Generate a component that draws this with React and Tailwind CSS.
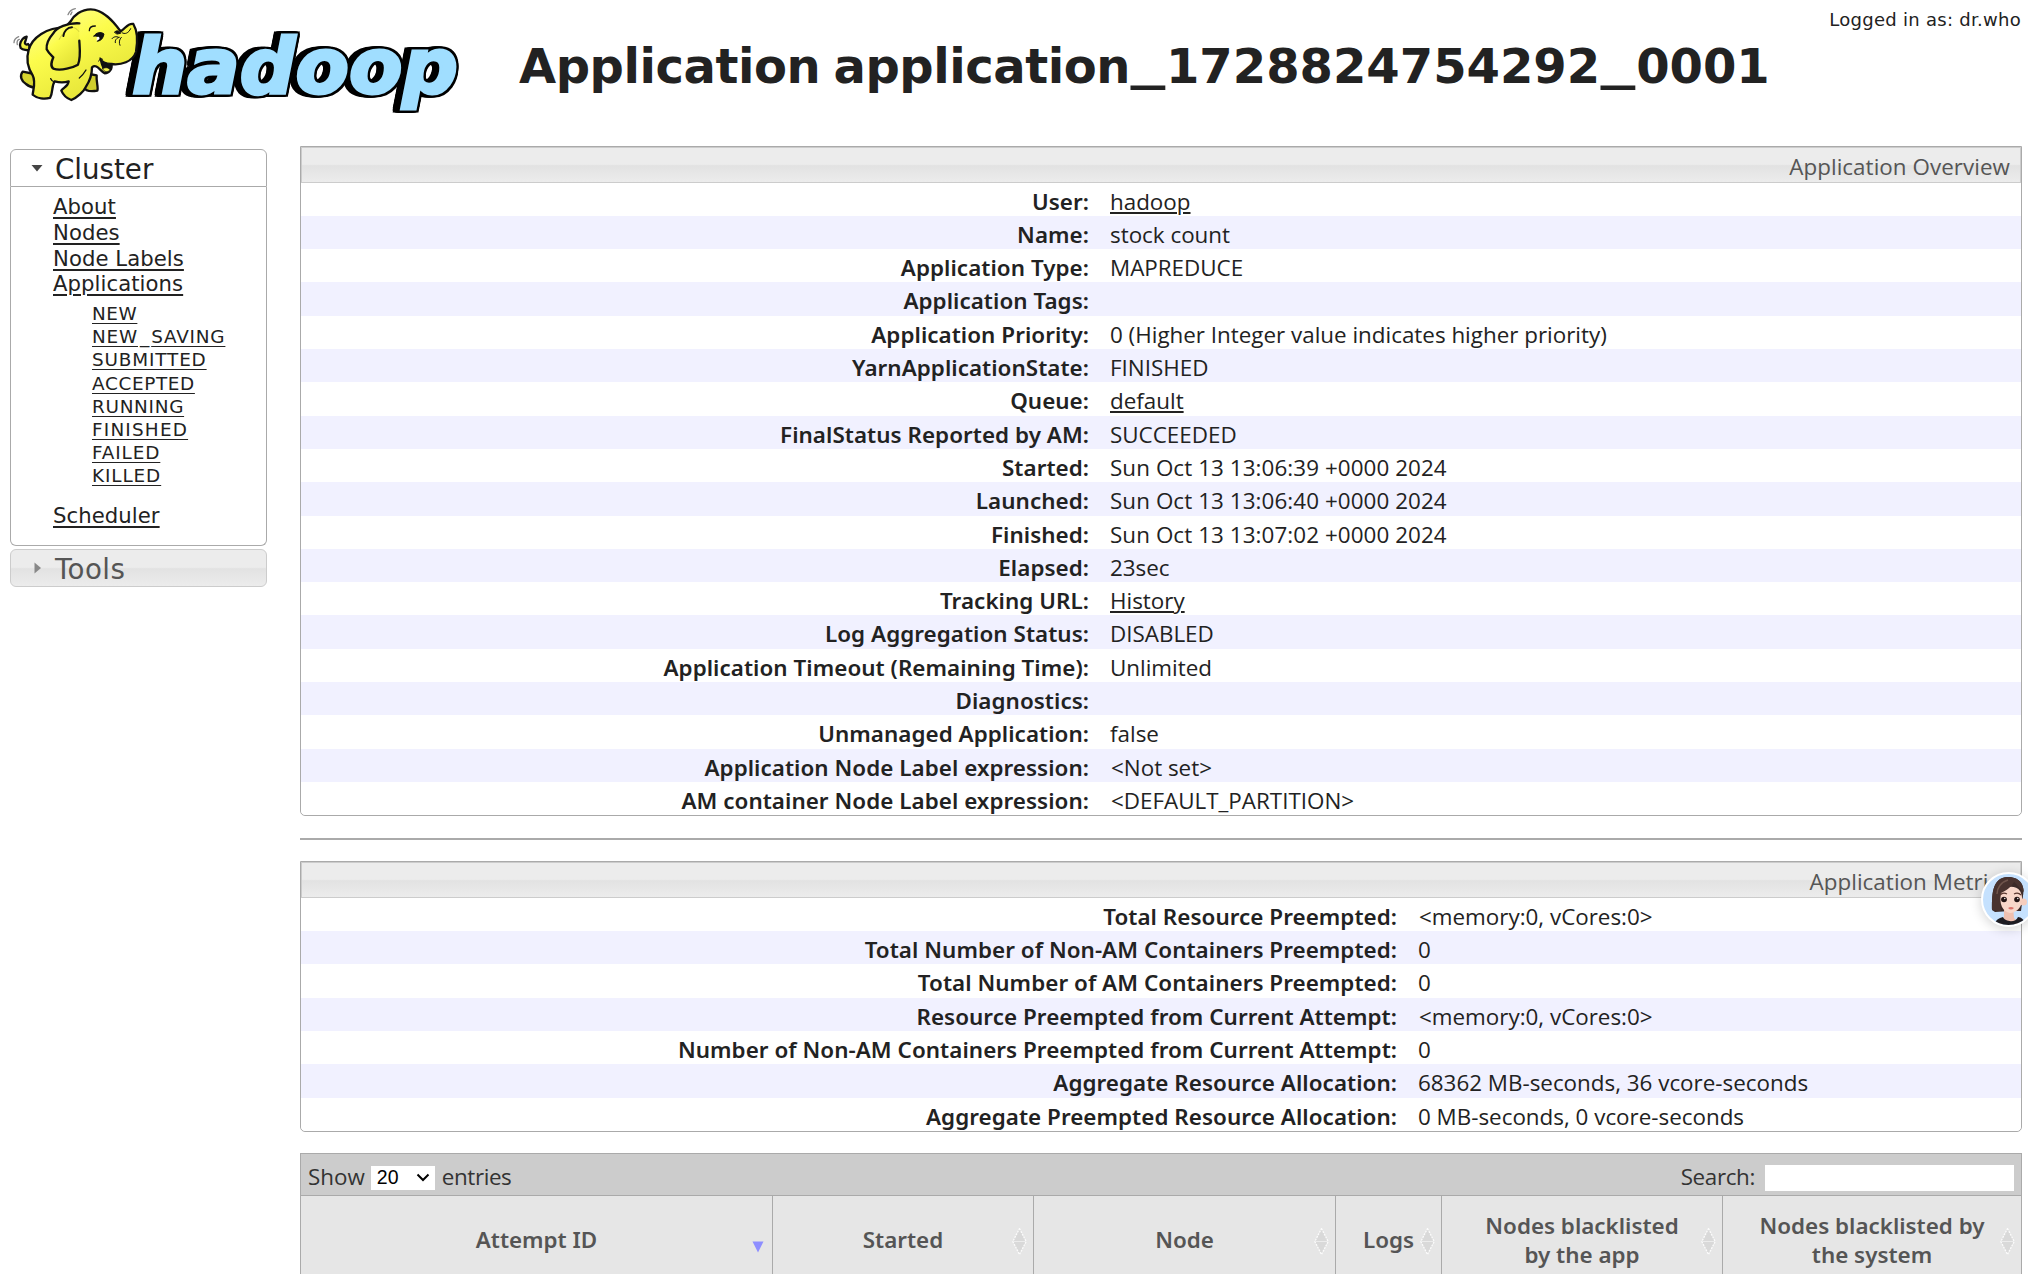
import React from "react";

const overview = [
  ["User:", "hadoop", true],
  ["Name:", "stock count"],
  ["Application Type:", "MAPREDUCE"],
  ["Application Tags:", ""],
  ["Application Priority:", "0 (Higher Integer value indicates higher priority)"],
  ["YarnApplicationState:", "FINISHED"],
  ["Queue:", "default", true],
  ["FinalStatus Reported by AM:", "SUCCEEDED"],
  ["Started:", "Sun Oct 13 13:06:39 +0000 2024"],
  ["Launched:", "Sun Oct 13 13:06:40 +0000 2024"],
  ["Finished:", "Sun Oct 13 13:07:02 +0000 2024"],
  ["Elapsed:", "23sec"],
  ["Tracking URL:", "History", true],
  ["Log Aggregation Status:", "DISABLED"],
  ["Application Timeout (Remaining Time):", "Unlimited"],
  ["Diagnostics:", ""],
  ["Unmanaged Application:", "false"],
  ["Application Node Label expression:", "<Not set>"],
  ["AM container Node Label expression:", "<DEFAULT_PARTITION>"],
];

const metrics = [
  ["Total Resource Preempted:", "<memory:0, vCores:0>"],
  ["Total Number of Non-AM Containers Preempted:", "0"],
  ["Total Number of AM Containers Preempted:", "0"],
  ["Resource Preempted from Current Attempt:", "<memory:0, vCores:0>"],
  ["Number of Non-AM Containers Preempted from Current Attempt:", "0"],
  ["Aggregate Resource Allocation:", "68362 MB-seconds, 36 vcore-seconds"],
  ["Aggregate Preempted Resource Allocation:", "0 MB-seconds, 0 vcore-seconds"],
];

const links = ["About", "Nodes", "Node Labels", "Applications"];

const states = [
  ["NEW", "tracking-[0.6px]"],
  ["NEW_SAVING", "tracking-[0.8px]"],
  ["SUBMITTED", "tracking-[0.85px]"],
  ["ACCEPTED", "tracking-[0.65px]"],
  ["RUNNING", "tracking-[0.7px]"],
  ["FINISHED", "tracking-[1.2px]"],
  ["FAILED", "tracking-[0.9px]"],
  ["KILLED", "tracking-[0.9px]"],
];

const columns = [
  [["Attempt ID"], "w-[472px]", true],
  [["Started"], "w-[261px]"],
  [["Node"], "w-[302px]"],
  [["Logs"], "w-[106px]"],
  [["Nodes blacklisted", "by the app"], "w-[281px]"],
  [["Nodes blacklisted by", "the system"], "w-[298px]"],
];

function Logo() {
  return (
    <svg width="470" height="120" viewBox="0 0 470 120" className="block">
      <g className="[filter:drop-shadow(2px_0_0_#000)_drop-shadow(-3px_0_0_#000)_drop-shadow(0_2px_0_#000)_drop-shadow(0_-2px_0_#000)_drop-shadow(-4px_0_0_#000)]">
        <text
          x="132"
          y="93"
          fontSize="77"
          fontWeight="700"
          fontStyle="italic"
          textLength="326"
          lengthAdjust="spacingAndGlyphs"
          fill="#a0deff"
          stroke="#a0deff"
          strokeWidth="3"
          strokeLinejoin="miter"
          className="font-[DejaVu_Sans]"
        >
          hadoop
        </text>
      </g>
      <defs>
        <linearGradient id="skin" x1="0" y1="0" x2="0.6" y2="1">
          <stop offset="0" stopColor="#ffff9e" />
          <stop offset="0.45" stopColor="#fcfc4c" />
          <stop offset="1" stopColor="#e3e236" />
        </linearGradient>
      </defs>
      <g transform="scale(0.3333)" stroke="#111" strokeWidth="7" strokeLinejoin="round" strokeLinecap="round" fill="url(#skin)">
        <path d="M68 215C58 228 64 244 78 252C88 260 98 264 108 262L104 222Z" fill="#d6d52f" />
        <path d="M252 262C256 272 268 276 292 272C296 262 288 246 290 226L268 222Z" fill="#cfce2d" />
        <path d="M85 152C76 148 70 152 62 144C56 132 64 118 74 112L80 110L76 124C72 132 80 136 84 132C90 136 90 146 85 152Z" />
        <path d="M196 82C140 82 96 112 86 150C78 176 84 204 98 226C108 246 100 266 98 284C112 296 134 298 150 294C160 276 154 258 164 244C178 248 194 248 206 244C204 260 190 262 184 272C190 286 202 296 214 300C232 292 252 274 258 260C270 242 276 220 276 202C290 190 300 212 314 220C328 220 338 206 334 192C362 196 398 186 408 156C414 122 412 92 400 72C384 68 378 84 362 94C340 64 310 28 272 28C244 28 222 46 212 64Z" />
        <path d="M300 174C304 196 310 212 320 216C334 212 336 198 332 190C318 190 306 184 300 174Z" fill="#111" strokeWidth="4" />
        <path d="M308 206C318 200 328 204 330 210C322 218 312 216 308 206Z" fill="#f3f24a" strokeWidth="2" />
        <path d="M238 70C204 68 168 82 160 100C146 116 138 130 140 148C146 160 154 166 160 172C154 186 150 198 160 206C184 214 220 202 234 194C244 170 238 132 238 122" />
        <path d="M236 94C222 72 196 82 178 118" fill="none" strokeWidth="3" stroke="#c9c83a" />
        <path d="M216 82C202 82 192 94 190 108" fill="none" strokeWidth="6" />
        <path d="M268 92C268 82 276 78 286 78" fill="none" strokeWidth="4" />
        <path d="M282 108C288 98 302 94 312 102C310 114 304 122 292 124C300 114 296 108 282 108Z" fill="#111" strokeWidth="3" />
        <path d="M290 112C296 108 300 112 298 118L290 122Z" fill="#fff" stroke="none" />
        <path d="M344 96C350 90 358 92 362 100L352 102Z" fill="#111" strokeWidth="3" />
        <path d="M366 98C374 104 386 100 392 86M336 116C340 110 350 108 356 112M346 128C344 120 350 114 358 112M360 136C356 128 358 118 364 112M308 178C298 170 300 182 296 184" fill="none" strokeWidth="3" />
        <path d="M152 236C156 244 160 246 164 244M258 210C252 220 246 228 238 234" fill="none" strokeWidth="4" />
        <path d="M204 44C208 34 214 28 226 26M212 44L216 36M42 128C42 120 46 114 56 110M52 134C50 126 52 120 58 118" fill="none" stroke="#888" strokeWidth="4" />
      </g>
    </svg>
  );
}

function Avatar() {
  return (
    <div className="absolute left-[1981px] top-[872px] size-[55px] overflow-hidden rounded-full border-2 border-white bg-[#c5e1fe] shadow-[0_2px_12px_rgba(0,0,0,0.18)]">
      <svg width="51" height="51" viewBox="0 0 51 51">
        <path d="M9 36C9 24 8 3 25 3C38 3 42 12 40 22L38 37L28 37L12 38Z" fill="#3b2a28" />
        <path d="M21 33L30 33L31 44L37 50L14 50L21 43Z" fill="#efc0b0" />
        <path d="M17 17C22 12 33 11 37 17C42 26 38 38 27 39C20 38 16 31 17 17Z" fill="#f8d7ca" />
        <circle cx="40.500" cy="28" r="3.500" fill="#f6cdbd" />
        <path d="M9 36C9 24 8 3 25 3C34 3 40 8 41 18C36 14 33 9 31 8C28 14 22 17 18 19C17 26 17 31 18 37Z" fill="#49332f" />
        <path d="M14 20C14 14 18 8 25 6" stroke="#70554c" strokeWidth="1.500" fill="none" />
        <path d="M17 21Q20 18 24 20M31 20Q35 18 38 21" stroke="#5a3830" strokeWidth="1.300" fill="none" />
        <ellipse cx="21" cy="25.500" rx="2.900" ry="2.700" fill="#231515" />
        <ellipse cx="34" cy="25.500" rx="2.800" ry="2.700" fill="#231515" />
        <circle cx="21.800" cy="24.500" r="0.700" fill="#fff" />
        <circle cx="34.800" cy="24.500" r="0.700" fill="#fff" />
        <path d="M25 34Q28 32 31 34Q28 37 25 34Z" fill="#d9736c" />
        <path d="M12 51C12 46 16 44 20 43C22 48 33 49 35 43C38 43 42 46 43 51Z" fill="#1d1c22" />
      </svg>
    </div>
  );
}

/* Text in which every underscore is drawn wider than the font's own. */
function Wide({ text, bar }) {
  return text.split("_").map((part, i) => (
    <React.Fragment key={i}>
      {i > 0 && <span className={bar}>_</span>}
      {part}
    </React.Fragment>
  ));
}

function InfoPanel({ title, rows, labelWidth }) {
  return (
    <div className="rounded-b-[5px] border border-[#aaaaaa] bg-white">
      <div className="h-[35.600px] border border-[#cccccc] bg-[linear-gradient(#ececec_0%,#ececec_48%,#e2e2e2_52%,#ececec_100%)] pr-[10px] text-right leading-[37px] tracking-[0.050px] text-[#555555]">
        {title}
      </div>
      {rows.map(([label, value, link], i) => (
        <div key={label} className={`flex h-[33.300px] gap-[21px] pt-[2px] leading-[33px] ${i % 2 ? "bg-[#f1f1ff]" : "bg-white"} last:rounded-b-[5px]`}>
          <div className={`${labelWidth} shrink-0 text-right font-[Noto_Sans] font-semibold tracking-[0.050px] whitespace-nowrap`}>{label}</div>
          <div className={`whitespace-nowrap ${value.startsWith("Sun") ? "tracking-[0.080px]" : ""} ${value.startsWith("<") ? "pl-px" : ""}`}>
            {link ? <a className="underline decoration-2 underline-offset-[2px]">{value}</a> : value}
          </div>
        </div>
      ))}
    </div>
  );
}

function SortIcon({ active }) {
  return active ? (
    <svg className="absolute right-[8px] top-[45px]" width="12" height="12" viewBox="0 0 12 12">
      <path d="M0.500 0.500H11.500L6 11.500Z" fill="#8e8eff" />
    </svg>
  ) : (
    <svg className="absolute right-[6px] top-[32px]" width="15" height="27" viewBox="0 0 15 27">
      <path d="M7.500 0.500L14 13H1ZM1 14H14L7.500 26.500Z" fill="#d9d9d9" />
      <path d="M7.500 0.500L14.200 13.500L7.500 26.500L0.800 13.500Z" fill="none" stroke="#fbfbfb" strokeWidth="1.300" strokeDasharray="2 1" />
      <path d="M1 13.500H14" stroke="#ececec" />
    </svg>
  );
}

export default function App() {
  return (
    <div className="relative h-[1274px] w-[2028px] overflow-hidden bg-white font-[Open_Sans,sans-serif] text-[22.4px] text-[#222222]">
      <header className="flex h-[146px] font-[DejaVu_Sans,sans-serif]">
        <div className="w-[519px] shrink-0">
          <Logo />
        </div>
        <h1 className="mt-[36px] w-[1260px] shrink-0 text-[48px] leading-[60px] font-bold whitespace-nowrap">
          <span className="tracking-[-0.450px] [word-spacing:-3px]">Application application</span>
          <Wide text="_1728824754292_0001" bar="mx-[6px] inline-block -translate-y-[4px] scale-x-[1.450]" />
        </h1>
        <div className="mt-[8px] -ml-10 grow pr-[7px] text-right text-[18px] leading-[24px] tracking-[0.280px] whitespace-nowrap">
          Logged in as: dr.who
        </div>
      </header>

      <div className="flex items-start">
        <nav className="mt-[3px] ml-[10px] w-[257px] shrink-0 font-[DejaVu_Sans,sans-serif]">
          <div className="flex h-[38px] items-center rounded-t-[6px] border border-[#aaaaaa] bg-white pl-[20px]">
            <svg width="12" height="8" viewBox="0 0 12 8" className="shrink-0">
              <path d="M0.500 1H11.500L6 7.500Z" fill="#454545" />
            </svg>
            <span className="mt-[3px] ml-[12px] text-[27.700px] leading-[36px]">Cluster</span>
          </div>
          <div className="h-[359px] rounded-b-[6px] border border-t-0 border-[#aaaaaa] pt-[7px] pl-[42px]">
            {links.map((l) => (
              <div key={l} className="h-[25.800px] text-[21.200px] leading-[26px] tracking-[0.060px]">
                <a className="underline decoration-2 underline-offset-[3px]">{l}</a>
              </div>
            ))}
            <div className="mt-[5px] pl-[39px]">
              {states.map(([s, tracking]) => (
                <div key={s} className="h-[23.150px] text-[18.400px] leading-[23px]">
                  <a className={`underline decoration-1 underline-offset-[3px] ${tracking}`}>
                    <Wide text={s} bar="px-[2px] tracking-normal" />
                  </a>
                </div>
              ))}
            </div>
            <div className="mt-[16px] text-[21.200px] leading-[26px] tracking-[0.060px]">
              <a className="underline decoration-2 underline-offset-[3px]">Scheduler</a>
            </div>
          </div>
          <div className="mt-[3px] flex h-[38px] items-center rounded-[6px] border border-[#cccccc] bg-[linear-gradient(#ececec_0%,#ececec_48%,#e2e2e2_52%,#ececec_100%)] pl-[23px] text-[#555555]">
            <svg width="8" height="12" viewBox="0 0 8 12" className="shrink-0">
              <path d="M0.500 0.500V11.500L7 6Z" fill="#888888" />
            </svg>
            <span className="mt-[3px] ml-[13px] text-[27.700px] leading-[36px] tracking-[0.400px]">Tools</span>
          </div>
        </nav>

        <main className="ml-[33px] w-[1722px] shrink-0">
          <InfoPanel title="Application Overview" rows={overview} labelWidth="w-[788px]" />
          <div className="mt-[22px] mb-[21px] h-[2px] bg-[#aaaaaa]" />
          <InfoPanel title="Application Metrics" rows={metrics} labelWidth="w-[1096px]" />

          <div className="mt-[21px] w-[1722px] border border-[#aaaaaa]">
            <div className="flex h-[41px] items-center bg-[#cccccc] pr-[7px] pl-[7px] text-[#333333]">
              <span className="mt-[5px] leading-[36px]">Show</span>
              <div className="mt-[7px] ml-[6px] flex h-[24px] w-[64px] items-center justify-between bg-white pr-[5px] pl-[6px] font-[Liberation_Sans] text-[19.500px] text-black">
                20
                <svg width="14" height="9" viewBox="0 0 14 9">
                  <path d="M1.500 1.500L7 7L12.500 1.500" fill="none" stroke="#000" strokeWidth="2" />
                </svg>
              </div>
              <span className="mt-[5px] ml-[7px] leading-[36px] tracking-[-0.400px]">entries</span>
              <span className="mt-[5px] ml-auto leading-[36px] tracking-[-0.350px]">Search:</span>
              <div className="mt-[8px] ml-[10px] h-[26px] w-[249px] bg-white" />
            </div>
            <div className="flex h-[92px] border-t border-[#aaaaaa] bg-[#e6e6e6] font-[Noto_Sans] font-semibold text-[#555555]">
              {columns.map(([lines, width, active]) => (
                <div key={lines[0]} className={`${width} relative flex shrink-0 flex-col items-center justify-center border-r border-[#aaaaaa] leading-[29px] last:border-r-0 ${lines.length > 1 ? "pb-[3px]" : "pb-[4px]"}`}>
                  {lines.map((t) => (
                    <span key={t} className="whitespace-nowrap">{t}</span>
                  ))}
                  <SortIcon active={active} />
                </div>
              ))}
            </div>
          </div>
        </main>
      </div>
      <Avatar />
    </div>
  );
}
